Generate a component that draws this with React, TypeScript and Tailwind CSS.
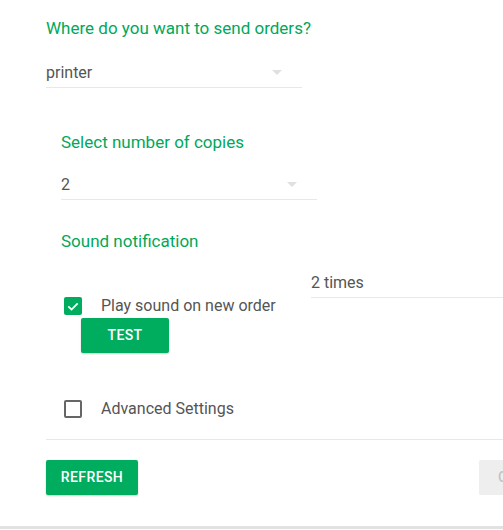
import React from "react";

const Arrow = () => (
  <svg width="10" height="5" viewBox="0 0 10 5" className="shrink-0">
    <path d="M0 0 L10 0 L5 5 Z" fill="#e0e0e0" />
  </svg>
);

const Select = ({ value, w }: { value: string; w: string }) => (
  <div className={`${w} flex items-center justify-between border-b border-[#e8e8e8] h-[30px] pr-[20px]`}>
    <span className="text-[16px] text-[#555555]">{value}</span>
    <Arrow />
  </div>
);

const Check = ({ checked }: { checked: boolean }) =>
  checked ? (
    <div className="w-[18px] h-[18px] rounded-[2px] bg-[#00ad5f] flex items-center justify-center">
      <svg width="14" height="14" viewBox="0 0 24 24">
        <path d="M4 12.5 L9.5 18 L20 7.5" stroke="#fff" strokeWidth="3" fill="none" />
      </svg>
    </div>
  ) : (
    <div className="w-[18px] h-[18px] rounded-[2px] border-2 border-[#666666]" />
  );

export default function App() {
  return (
    <div
      className="w-[503px] h-[530px] overflow-hidden bg-white relative"
      style={{ fontFamily: "Roboto, 'Noto Sans', sans-serif" }}
    >
      <div className="h-[529px] border-b-[3px] border-[#e2e2e2] pl-[46px]">
        <div className="pt-[16px] text-[17px] leading-[24px] text-[#00a85a]">
          Where do you want to send orders?
        </div>
        <div className="mt-[18px]">
          <Select value="printer" w="w-[256px]" />
        </div>
        <div className="pl-[15px]">
          <div className="mt-[42px] text-[17px] leading-[24px] text-[#00a85a]">
            Select number of copies
          </div>
          <div className="mt-[16px]">
            <Select value="2" w="w-[256px]" />
          </div>
          <div className="mt-[29px] text-[17px] leading-[24px] text-[#00a85a]">
            Sound notification
          </div>
          <div className="flex">
            <div className="w-[250px] shrink-0 pt-[44px]">
              <div className="flex items-center h-[18px]">
                <div className="pl-[3px] w-[40px]">
                  <Check checked />
                </div>
                <span className="text-[16px] text-[#555555]">Play sound on new order</span>
              </div>
              <button className="ml-[20px] mt-[3px] w-[88px] h-[35px] rounded-[2px] bg-[#00ad5f] text-white text-[14px] font-medium tracking-[0.4px] shadow-[0_1px_2px_rgba(0,0,0,0.2)]">
                TEST
              </button>
            </div>
            <div className="pt-[15px] flex-1">
              <div className="w-[250px] border-b border-[#e8e8e8] h-[30px] flex items-center">
                <span className="text-[16px] text-[#555555]">2 times</span>
              </div>
            </div>
          </div>
          <div className="flex items-center h-[18px] mt-[47px]">
            <div className="pl-[3px] w-[40px]">
              <Check checked={false} />
            </div>
            <span className="text-[16px] text-[#555555]">Advanced Settings</span>
          </div>
        </div>
        <div className="mt-[21px] border-t border-[#e8e8e8] w-[500px]" />
        <div className="mt-[20px] flex">
          <button className="shrink-0 w-[92px] h-[35px] rounded-[2px] bg-[#00ad5f] text-white text-[14px] font-medium tracking-[0.4px] shadow-[0_1px_2px_rgba(0,0,0,0.2)]">
            REFRESH
          </button>
          <button className="shrink-0 ml-[341px] w-[90px] h-[35px] rounded-[2px] bg-[#eeeeee] text-[#c4c4c4] text-[14px] font-medium tracking-[0.4px] pl-[19px] text-left">
            CLOSE
          </button>
        </div>
      </div>
    </div>
  );
}
